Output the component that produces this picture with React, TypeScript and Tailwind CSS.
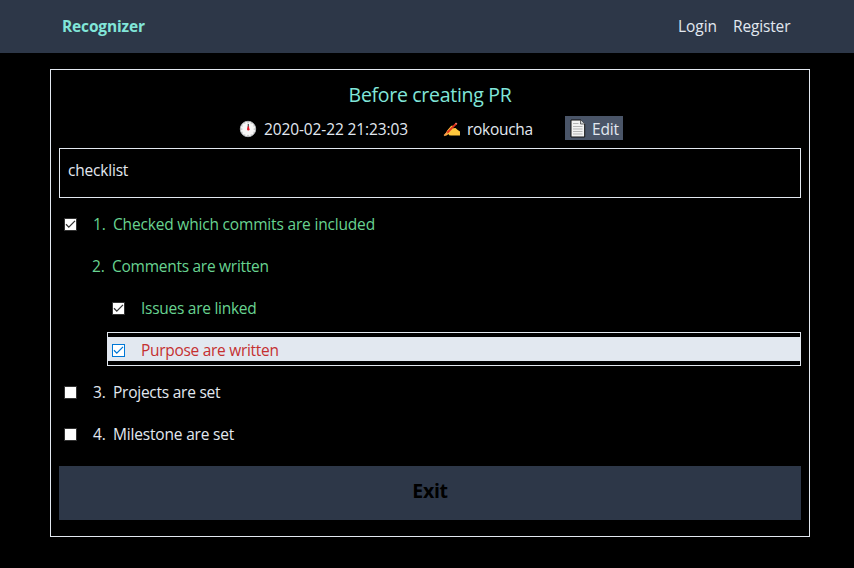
import React from "react";

type BoxState = "checked" | "empty" | "focused";

function CheckBox({ state }: { state: BoxState }) {
  const stroke = state === "focused" ? "#0078d7" : "#333333";
  return (
    <svg width="13" height="13" viewBox="0 0 13 13" className="block shrink-0">
      <rect x="0.5" y="0.5" width="12" height="12" fill="#ffffff" stroke={stroke} />
      {state !== "empty" && (
        <path d="M2 6.3 L4.8 9.1 L11 2.9" fill="none" stroke={stroke} strokeWidth="1.3" />
      )}
    </svg>
  );
}

function Clock() {
  return (
    <svg width="18" height="18" viewBox="0 0 18 18" className="mt-0.5 block shrink-0">
      <circle cx="9" cy="9" r="7.7" fill="#f7f7f7" stroke="#b4b8bb" strokeWidth="1" />
      <g fill="#777777">
        <circle cx="9" cy="2.8" r="0.5" />
        <circle cx="15.2" cy="9" r="0.5" />
        <circle cx="9" cy="15.2" r="0.5" />
        <circle cx="2.8" cy="9" r="0.5" />
        <circle cx="12.1" cy="3.7" r="0.4" />
        <circle cx="14.3" cy="5.9" r="0.4" />
        <circle cx="14.3" cy="12.1" r="0.4" />
        <circle cx="12.1" cy="14.3" r="0.4" />
        <circle cx="5.9" cy="14.3" r="0.4" />
        <circle cx="3.7" cy="12.1" r="0.4" />
        <circle cx="3.7" cy="5.9" r="0.4" />
        <circle cx="5.9" cy="3.7" r="0.4" />
      </g>
      <path d="M9.3 4 V9" stroke="#444444" strokeWidth="1.2" />
      <path d="M9.3 6.5 V9" stroke="#e81224" strokeWidth="1.6" />
      <circle cx="9.3" cy="9.2" r="1.2" fill="#e81224" />
    </svg>
  );
}

function WritingHand() {
  return (
    <svg width="18" height="18" viewBox="0 0 18 18" className="mt-0.5 block shrink-0">
      <path
        d="M4.2 10.5 L8 6 Q9.5 4.8 10 6.2 L10 8.2 L12.5 8 Q15 10.5 17 11.5 V15.6 H8 Q5.5 15.6 5.5 14 L3.5 15.6 H1.5 Z"
        fill="#ffc83d"
      />
      <path d="M13.2 3.6 L4 13" stroke="#e0301e" strokeWidth="1.9" />
      <path d="M13.7 3.1 L12.7 4.1" stroke="#f4806c" strokeWidth="1.9" />
      <path d="M4.3 12.7 L1.2 15.6" stroke="#f59a4a" strokeWidth="1.6" />
    </svg>
  );
}

function Page() {
  return (
    <svg width="16" height="20" viewBox="0 0 16 20" className="mt-0.5 block shrink-0">
      <path d="M1 1 H10.5 L14.7 5 V18 H1 Z" fill="#f2f2f2" stroke="#111111" />
      <path d="M10.5 1 V5 H14.7" fill="#d5d8da" stroke="#333333" strokeWidth="0.7" />
      <path
        d="M3 4.5 H8.5 M3 7.5 H12.5 M3 10 H12.5 M3 12.5 H12.5 M3 15 H12.5"
        stroke="#b5b5b5"
        strokeWidth="1"
      />
    </svg>
  );
}

export default function App() {
  return (
    <div className="h-[568px] w-[854px] overflow-hidden bg-black font-['Open_Sans','Noto_Sans',sans-serif] text-[15.5px] leading-6 whitespace-nowrap text-[#e2e8f0]">
      <header className="flex h-[53px] items-center bg-[#2d3748] pr-16 pb-0.5 pl-[62px]">
        <span className="flex-1 font-bold tracking-[-0.15px] text-[#81e6d9]">Recognizer</span>
        <nav className="flex">
          <a className="w-[55px] tracking-[-0.05px]">Login</a>
          <a className="w-[57px] tracking-[-0.15px]">Register</a>
        </nav>
      </header>

      <main className="mt-4 ml-[50px] flex h-[468px] w-[760px] flex-col border border-[#e2e8f0] px-2">
        <h1 className="mt-2.5 text-center text-[19.5px] leading-[30px] tracking-[-0.3px] text-[#81e6d9]">
          Before creating PR
        </h1>
        <div className="mt-1.5 flex h-6 items-center pl-[180px]">
          <div className="flex w-[204px] items-center">
            <Clock />
            <span className="ml-[7px] pt-0.5 tracking-[-0.12px]">2020-02-22 21:23:03</span>
          </div>
          <div className="flex w-[122px] items-center">
            <WritingHand />
            <span className="ml-1.5 pt-0.5 tracking-[-0.3px]">rokoucha</span>
          </div>
          <button className="flex h-6 w-[58px] items-center bg-[#4a5568] pl-[5px]">
            <Page />
            <span className="ml-1.5 pt-0.5 tracking-[-0.2px]">Edit</span>
          </button>
        </div>
        <div className="mt-2 h-[50px] border border-[#e2e8f0] px-2 pt-[9px] tracking-[-0.2px]">
          checklist
        </div>

        <div className="mt-2 flex flex-col">
          <div className="flex h-[42px] items-center pb-[5px] pl-[5px] text-[#68d391]">
            <CheckBox state="checked" />
            <span className="ml-4 w-5 pb-px tracking-[-0.2px]">1.</span>
            <span className="pb-px tracking-[-0.18px]">Checked which commits are included</span>
          </div>
          <div className="flex h-[42px] items-center pb-[5px] pl-[33px] text-[#68d391]">
            <span className="w-5 pb-px tracking-[-0.2px]">2.</span>
            <span className="pb-px tracking-[-0.27px]">Comments are written</span>
          </div>
          <div className="flex h-[42px] items-center pb-[5px] pl-[53px] text-[#68d391]">
            <CheckBox state="checked" />
            <span className="ml-4 pb-px tracking-[-0.27px]">Issues are linked</span>
          </div>
          <div className="mb-2 ml-12 h-[34px] border border-[#e2e8f0] py-1">
            <div className="flex h-6 items-center bg-[#e2e8f0] pt-[3px] pl-1 text-[#c53030]">
              <CheckBox state="focused" />
              <span className="ml-4 pb-px tracking-[-0.3px]">Purpose are written</span>
            </div>
          </div>
          <div className="flex h-[42px] items-center pb-[5px] pl-[5px]">
            <CheckBox state="empty" />
            <span className="ml-4 w-5 pb-px tracking-[-0.2px]">3.</span>
            <span className="pb-px tracking-[-0.25px]">Projects are set</span>
          </div>
          <div className="flex h-[42px] items-center pb-[5px] pl-[5px]">
            <CheckBox state="empty" />
            <span className="ml-4 w-5 pb-px tracking-[-0.2px]">4.</span>
            <span className="pb-px tracking-[-0.18px]">Milestone are set</span>
          </div>
        </div>

        <button className="mt-2 h-[54px] bg-[#2d3748] pb-1 text-[19.5px] font-bold tracking-[-0.3px] text-black">
          Exit
        </button>
      </main>
    </div>
  );
}
